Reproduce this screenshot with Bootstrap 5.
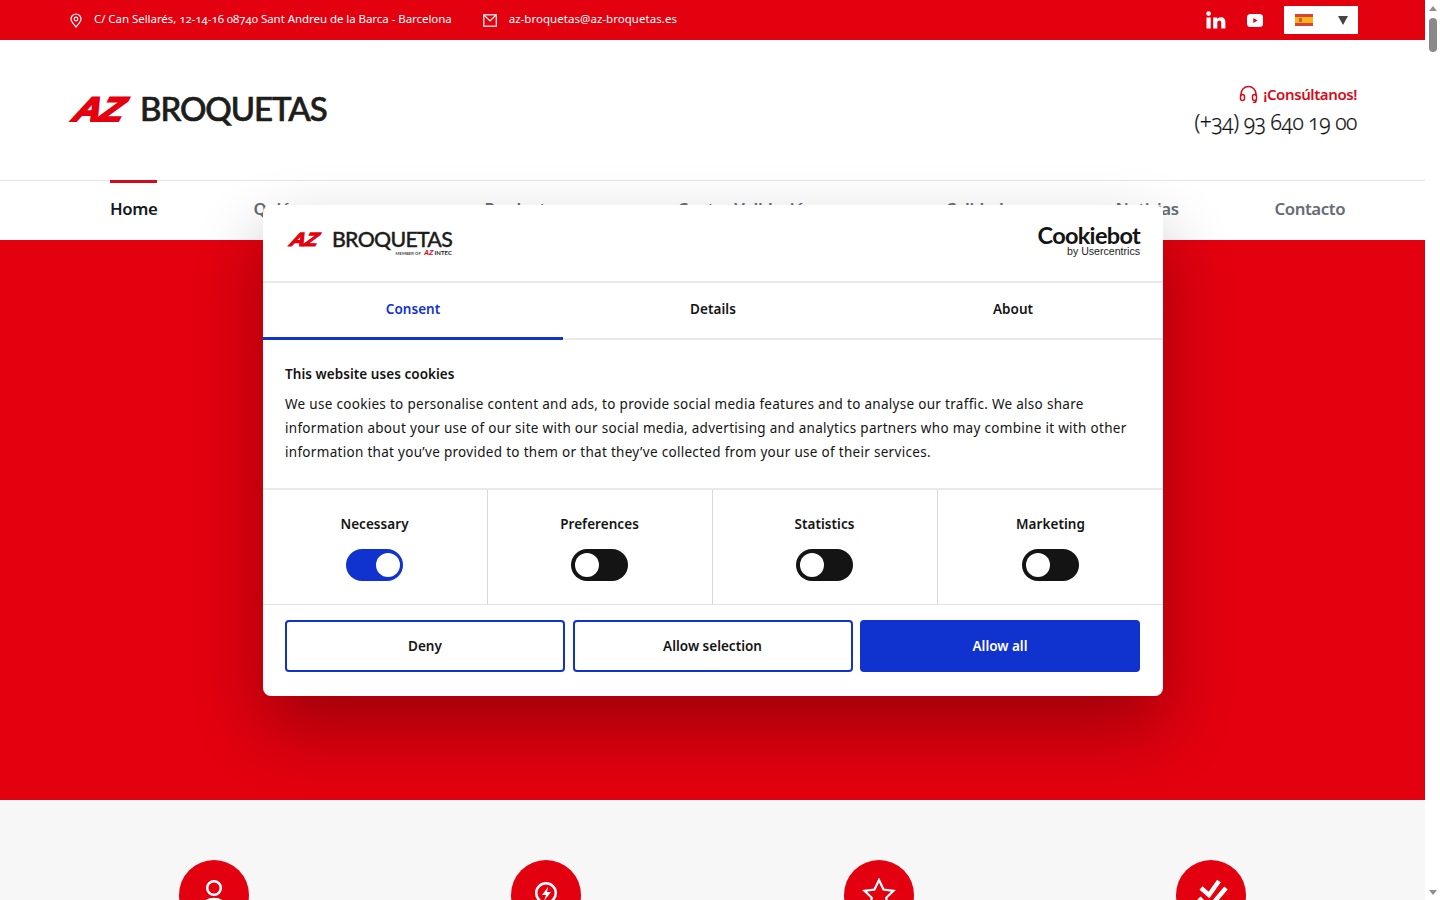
<!DOCTYPE html>
<html lang="es"><head><meta charset="utf-8"><title>AZ Broquetas</title>
<link href="https://cdn.jsdelivr.net/npm/bootstrap@5.3.0/dist/css/bootstrap.min.css" rel="stylesheet">
<style>
:root{--red:#e3000f;--blue:#1032cf;--ink:#141414}
html,body{height:900px;overflow:hidden}
body{font-family:"Noto Sans",sans-serif;background:#fff;width:1440px}
.page-col{width:1425px;height:900px;overflow:hidden;flex:none}
.scroll-rail{width:15px;height:900px;background:#fff;flex:none}
.scroll-up,.scroll-down{width:0;height:0;border-left:4.5px solid transparent;border-right:4.5px solid transparent;margin:0 auto}
.scroll-up{border-bottom:5px solid #8f8f8f;margin-top:6px}
.scroll-down{border-top:5px solid #8f8f8f;margin-bottom:5px}
.scroll-thumb{width:8px;height:34px;background:#8a8a8a;border-radius:4px;margin:7px auto 0}
.top-strip{height:40px;background:var(--red);color:#fff;padding:0 67px 0 70px;font-size:11.5px;letter-spacing:-.055px;font-feature-settings:"onum"}
.top-strip svg{flex:none}
.strip-text{margin-bottom:2px}
.addr-text{margin-left:12px}
.mail-icon{margin-left:31px}
.mail-text{margin-left:11px;letter-spacing:.04px}
.tube-icon{margin-left:21px}
.lang-box{width:74px;height:28px;background:#fff;padding:0 10px 0 11px;margin-left:21px}
.lang-flag{width:18px;height:12px;position:relative;background:linear-gradient(#d8433a 25%,#f7b519 25% 75%,#d8433a 75%)}
.lang-flag::after{content:"";position:absolute;left:4px;top:4px;width:3px;height:4px;background:#c8612c}
.lang-caret{width:0;height:0;border-left:5.5px solid transparent;border-right:5.5px solid transparent;border-top:9px solid #444}
.brand-row{height:140px;padding:0 68px 0 70px}
.brand-mark{font:italic 700 34px/1 "Liberation Sans",sans-serif;color:var(--red);letter-spacing:-1.5px;transform:skewX(-16deg) scaleX(1.14);transform-origin:left bottom;width:64px;display:block;-webkit-text-stroke:2px var(--red);margin-bottom:2px}
.brand-word{font:500 33px/1 "Lato",sans-serif;color:#1d1d1b;letter-spacing:-1.05px;-webkit-text-stroke:.7px #1d1d1b;margin-left:6px;margin-bottom:3px}
.ask-line{color:#d60b1a;font-size:15px;font-weight:600;line-height:20px;letter-spacing:-.4px}
.ask-line svg{margin-right:5px}
.phone-line{color:#111;font-size:21px;font-weight:300;line-height:28px;letter-spacing:-.4px;font-feature-settings:"onum";margin-top:4px;-webkit-text-stroke:.2px #111}
.menu-row{height:60px;border-top:1px solid #e5e5e5;padding-left:110px;gap:96px}
.menu-item{margin-top:17px;font-size:16.8px;font-weight:600;color:#666b73;line-height:22px;letter-spacing:-.4px;white-space:nowrap;position:relative;height:22px;flex:none}
.menu-item.on{color:#15181e}
.menu-item.on::before{content:"";position:absolute;left:0;right:0;top:-18px;height:3px;background:#d60b1a}
.mw-who{width:135px}.mw-prod{width:97px}.mw-center{width:172px}.mw-qual{width:74px}.mw-news{width:63px}
.hero-band{height:560px;background:var(--red)}
.perks-band{height:100px;background:#f7f7f8;padding:60px 47.5px 0}
.perk-cell{flex:1 1 0}
.perk-disc{width:70px;height:70px;border-radius:50%;background:var(--red);margin:0 auto;padding-top:18px;text-align:center}
.perk-disc svg{display:block;margin:0 auto}
.consent-box{position:absolute;left:263px;top:205px;width:900px;height:491px;background:#fff;border-radius:8px;box-shadow:0 32px 68px rgba(0,0,0,.3);color:var(--ink);font-family:"Noto Sans",sans-serif;letter-spacing:.05px;overflow:hidden}
.consent-head{height:78px;border-bottom:2px solid #e9e9e9;padding:0 23px 0 25px}
.cb-logo-mark{font:italic 700 19px/1 "Liberation Sans",sans-serif;color:var(--red);letter-spacing:-.9px;transform:skewX(-16deg) scaleX(1.14);transform-origin:left bottom;width:40px;display:block;-webkit-text-stroke:1.1px var(--red)}
.cb-logo-word{font:500 21.3px/1 "Lato",sans-serif;letter-spacing:-.72px;color:#1d1d1b;-webkit-text-stroke:.35px #1d1d1b;margin-left:4px}
.cb-sub{font:700 4.2px/6px "Lato",sans-serif;text-align:right;color:#444;letter-spacing:.05px}
.cb-sub b{font:italic 700 7px/6px "Liberation Sans",sans-serif;color:var(--red);margin-left:2px}
.cb-sub i{font:700 6px/6px "Lato",sans-serif;color:#222}
.cb-right{padding-bottom:5px}
.cb-brand{font:700 23.5px/22px "Lato",sans-serif;letter-spacing:-.7px;color:#141414}
.cb-by{font:400 10.6px/11px "Liberation Sans",sans-serif;color:#222;text-align:right;letter-spacing:0}
.tab-row{height:57px;border-bottom:2px solid #e9e9e9}
.tab-cell{width:300px;font-size:13.5px;font-weight:600;text-align:center;line-height:53px;height:57px;margin-bottom:-2px}
.tab-cell.on{color:var(--blue);border-bottom:3px solid var(--blue)}
.consent-body{height:150px;padding:22px 22px 0;border-bottom:2px solid #e9e9e9}
.consent-title{font-size:13.5px;font-weight:600;line-height:24px;margin-bottom:6px}
.consent-text{font-size:13.5px;line-height:24px;margin:0;letter-spacing:.3px}
.toggle-row{height:115px;border-bottom:1px solid #e2e2e2}
.toggle-cell{flex:0 0 225px;text-align:center;font-size:13.5px;font-weight:600;padding:23px 1px 0 0;line-height:22px;border-right:1px solid #d8d8d8}
.toggle-cell:last-child{border-right:0;padding-right:0}
.pill{width:57px;height:32px;border-radius:16px;background:#141414;margin:14px auto 0;padding:4px}
.pill span{display:block;width:24px;height:24px;border-radius:50%;background:#fff}
.pill.yes{background:var(--blue);padding-left:30px}
.action-row{padding:15px 0 0 22px;gap:7.5px}
.act-btn{flex:0 0 280px;height:52px;font-size:13.5px;font-weight:600;color:var(--ink);background:#fff;border:2px solid var(--blue);border-radius:4px;padding:0}
.act-btn.solid{background:var(--blue);color:#fff}
</style></head>
<body class="d-flex position-relative">
<div class="page-col">
  <div class="top-strip d-flex align-items-center justify-content-between">
    <div class="d-flex align-items-center">
      <svg width="12" height="15" viewBox="0 0 12 15" fill="none" stroke="#fff" stroke-width="1.2"><path d="M6 14C3 10.5 1 8.3 1 6a5 5 0 0 1 10 0c0 2.3-2 4.500-5 8z"/><circle cx="6" cy="6" r="1.800"/></svg>
      <span class="strip-text addr-text">C/ Can Sellarés, 12-14-16 08740 Sant Andreu de la Barca - Barcelona</span>
      <svg class="mail-icon" width="15" height="13" viewBox="0 0 15 13" fill="none" stroke="#fff" stroke-width="1.200"><rect x=".8" y=".8" width="12.500" height="11.400"/><path d="M1 1l6 6 6-6"/></svg>
      <span class="strip-text mail-text">az-broquetas@az-broquetas.es</span>
    </div>
    <div class="d-flex align-items-center">
      <svg width="20" height="18" viewBox="0 0 20 18" fill="#fff"><circle cx="2.600" cy="2.600" r="2.300"/><rect x=".5" y="6.500" width="4.200" height="11"/><path d="M7.200 6.500h4v1.600c.8-1.200 2.200-1.900 3.700-1.900 3.200 0 4.500 2 4.500 5.200v6.100h-4.200v-5.500c0-1.500-.5-2.500-1.800-2.500-1.400 0-2.100 1-2.100 2.500v5.500H7.200z"/></svg>
      <svg class="tube-icon" width="16" height="13" viewBox="0 0 16 13"><rect width="16" height="13" rx="3.500" fill="#fff"/><path d="M6.300 4l4.200 2.500-4.200 2.500z" fill="#e3000f"/></svg>
      <div class="lang-box d-flex align-items-center justify-content-between">
        <span class="lang-flag"></span><span class="lang-caret"></span>
      </div>
    </div>
  </div>
  <div class="brand-row d-flex align-items-center justify-content-between">
    <div class="d-flex align-items-center"><span class="brand-mark">AZ</span><span class="brand-word">BROQUETAS</span></div>
    <div class="text-end">
      <div class="ask-line d-flex justify-content-end align-items-center"><svg width="19" height="18" viewBox="0 0 19 18" fill="none" stroke="#d60b1a" stroke-width="1.500"><path d="M2 11V9a7.500 7.500 0 0 1 15 0v2"/><rect x="1.500" y="9.500" width="4" height="6" rx="2"/><rect x="13.500" y="9.500" width="4" height="6" rx="2"/><path d="M17 15v1a2 2 0 0 1-2 1.500h-1"/></svg>¡Consúltanos!</div>
      <div class="phone-line">(+34) 93 640 19 00</div>
    </div>
  </div>
  <div class="menu-row d-flex">
    <span class="menu-item on">Home</span>
    <span class="menu-item mw-who">Quiénes somos</span>
    <span class="menu-item mw-prod">Productos</span>
    <span class="menu-item mw-center">Centro Validación</span>
    <span class="menu-item mw-qual">Calidad</span>
    <span class="menu-item mw-news">Noticias</span>
    <span class="menu-item">Contacto</span>
  </div>
  <div class="hero-band"></div>
  <div class="perks-band d-flex">
    <div class="perk-cell"><div class="perk-disc"><svg width="34" height="40" viewBox="0 0 34 40" fill="none" stroke="#fff" stroke-width="2.500"><circle cx="17" cy="10" r="6.800"/><path d="M5 32c0-7 5-11 12-11s12 4 12 11"/></svg></div></div>
    <div class="perk-cell"><div class="perk-disc"><svg width="34" height="40" viewBox="0 0 34 40" fill="none" stroke="#fff" stroke-width="2.500"><circle cx="17" cy="15" r="9.800"/><path d="M19 9l-6 8h4l-2 6 7-9h-4z" fill="#fff" stroke="none"/></svg></div></div>
    <div class="perk-cell"><div class="perk-disc"><svg width="34" height="40" viewBox="0 0 34 40" fill="none" stroke="#fff" stroke-width="2.200"><path d="M17 2l4.500 9.500 10 1.300-7.300 7 1.900 10.200L17 25l-9.100 5 1.900-10.200-7.300-7 10-1.300z"/></svg></div></div>
    <div class="perk-cell"><div class="perk-disc"><svg width="34" height="40" viewBox="0 0 34 40" fill="none" stroke="#fff" stroke-width="4.500"><path d="M7 10l8 7L25 3M5 20l10 10L32 10"/></svg></div></div>
  </div>
</div>
<div class="scroll-rail d-flex flex-column justify-content-between">
  <div><div class="scroll-up"></div><div class="scroll-thumb"></div></div>
  <div class="scroll-down"></div>
</div>

<div class="consent-box">
  <div class="consent-head d-flex align-items-center justify-content-between">
    <div>
      <div class="d-flex align-items-center"><span class="cb-logo-mark">AZ</span><span class="cb-logo-word">BROQUETAS</span></div>
      <div class="cb-sub">MEMBER OF <b>AZ</b> <i>INTEC</i></div>
    </div>
    <div class="cb-right"><div class="cb-brand">Cookiebot</div><div class="cb-by">by Usercentrics</div></div>
  </div>
  <div class="tab-row d-flex">
    <div class="tab-cell on">Consent</div><div class="tab-cell">Details</div><div class="tab-cell">About</div>
  </div>
  <div class="consent-body">
    <div class="consent-title">This website uses cookies</div>
    <p class="consent-text">We use cookies to personalise content and ads, to provide social media features and to analyse our traffic. We also share information about your use of our site with our social media, advertising and analytics partners who may combine it with other information that you’ve provided to them or that they’ve collected from your use of their services.</p>
  </div>
  <div class="toggle-row d-flex">
    <div class="toggle-cell">Necessary<div class="pill yes"><span></span></div></div>
    <div class="toggle-cell">Preferences<div class="pill"><span></span></div></div>
    <div class="toggle-cell">Statistics<div class="pill"><span></span></div></div>
    <div class="toggle-cell">Marketing<div class="pill"><span></span></div></div>
  </div>
  <div class="action-row d-flex">
    <button class="act-btn">Deny</button><button class="act-btn">Allow selection</button><button class="act-btn solid">Allow all</button>
  </div>
</div>
<script src="https://cdn.jsdelivr.net/npm/bootstrap@5.3.0/dist/js/bootstrap.bundle.min.js"></script>
</body></html>
